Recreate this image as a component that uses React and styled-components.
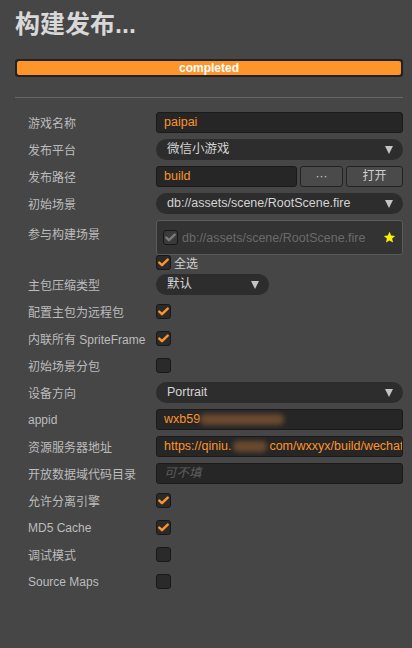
import React from "react";
import styled, { createGlobalStyle } from "styled-components";

const Global = createGlobalStyle`
  html, body { margin: 0; padding: 0; background: #464646; }
  body { font-family: "Liberation Sans", "Noto Sans CJK SC", sans-serif; }
  * { box-sizing: border-box; }
`;

const Page = styled.div`
  width: 412px;
  height: 648px;
  background: #464646;
  padding: 9px 9px 0 15px;
  overflow: hidden;
`;

const Title = styled.h1`
  margin: 0;
  font-size: 25px;
  line-height: 30px;
  font-weight: bold;
  color: #d8d8d8;
  letter-spacing: 0;
`;

const Progress = styled.div`
  margin-top: 20px;
  height: 18px;
  border: 2px solid #222;
  border-radius: 3px;
  background: #222;
  overflow: hidden;
`;

const ProgressFill = styled.div`
  height: 100%;
  background: #fd952b;
  border-radius: 2px;
  color: #fff;
  font-size: 12px;
  font-weight: bold;
  line-height: 14px;
  text-align: center;
`;

const Divider = styled.hr`
  margin: 20px 0 0 0;
  border: none;
  border-top: 1px solid #666;
  height: 0;
`;

const Form = styled.div`
  margin-top: 11px;
  padding-left: 13px;
  display: flex;
  flex-direction: column;
`;

const Row = styled.div`
  display: flex;
  align-items: ${(p) => (p.$top ? "flex-start" : "center")};
  height: ${(p) => p.$h || 27}px;
  padding-top: ${(p) => p.$pt || 0}px;
`;

const Label = styled.div`
  width: 128px;
  flex: none;
  font-size: 12px;
  color: #bcbcbc;
  white-space: nowrap;
  padding-top: ${(p) => p.$pt || 0}px;
`;

const Field = styled.div`
  flex: 1;
  display: flex;
  gap: 3px;
  min-width: 0;
`;

const Input = styled.div`
  flex: 1;
  height: 21px;
  min-width: 0;
  background: #262626;
  border: 1px solid #1a1a1a;
  border-radius: 3px;
  padding: 0 6px 0 7px;
  font-size: 12.5px;
  line-height: 19px;
  color: ${(p) => (p.$placeholder ? "#5e5e5e" : "#fd942b")};
  font-style: ${(p) => (p.$placeholder ? "italic" : "normal")};
  white-space: nowrap;
  overflow: hidden;
`;

const Blur = styled.span`
  display: inline-block;
  width: ${(p) => p.$w}px;
  height: 11px;
  vertical-align: middle;
  background: #6a4a30;
  filter: blur(2.5px);
  border-radius: 5px;
  margin: 0 ${(p) => p.$m || 0}px;
`;

const Select = styled.div`
  position: relative;
  flex: ${(p) => (p.$w ? "none" : "1")};
  width: ${(p) => (p.$w ? `${p.$w}px` : "auto")};
  height: 21px;
  background: #2d2d2d;
  border-radius: 11px;
  padding: 0 22px 0 11px;
  font-size: 12.5px;
  line-height: 21px;
  color: #d4d4d4;
  white-space: nowrap;
`;

const Arrow = styled.span`
  position: absolute;
  right: 10px;
  top: 7px;
  width: 0;
  height: 0;
  border-left: 4.5px solid transparent;
  border-right: 4.5px solid transparent;
  border-top: 8px solid #c4c4c4;
`;

const Button = styled.div`
  flex: none;
  width: ${(p) => p.$w}px;
  height: 21px;
  background: #4a4a4a;
  border: 1px solid #222;
  border-radius: 3px;
  color: #cfcfcf;
  font-size: 12px;
  line-height: 19px;
  text-align: center;
`;

const Box = styled.div`
  flex: 1;
  position: relative;
  height: 35px;
  background: #333;
  border: 1px solid #5a5a5a;
  border-radius: 3px;
  display: flex;
  align-items: center;
  padding: 0 6px;
  gap: 4px;
  font-size: 12.5px;
  color: #6a6a6a;
`;

const Star = styled.svg`
  position: absolute;
  right: 6px;
  top: 10px;
`;

const CheckBox = styled.div`
  flex: none;
  width: 15px;
  height: 15px;
  border-radius: 3px;
  border: 1px solid #181818;
  background: ${(p) => (p.$disabled ? "#3a3a3a" : "#2a2a2a")};
  display: flex;
  align-items: center;
  justify-content: center;
`;

const CheckLabel = styled.span`
  margin-left: 3px;
  font-size: 12px;
  color: #d0d0d0;
`;

const Check = ({ on, disabled }) => (
  <CheckBox $disabled={disabled}>
    {on && (
      <svg width="11" height="9" viewBox="0 0 11 9">
        <path
          d="M1.3 4.6 L4 7.2 L9.7 1.6"
          fill="none"
          stroke={disabled ? "#7a7a7a" : "#fd942b"}
          strokeWidth="2.4"
          strokeLinecap="round"
          strokeLinejoin="round"
        />
      </svg>
    )}
  </CheckBox>
);

const CheckRow = ({ label, on }) => (
  <Row>
    <Label>{label}</Label>
    <Check on={on} />
  </Row>
);

export default function App() {
  return (
    <Page>
      <Global />
      <Title>构建发布...</Title>
      <Progress>
        <ProgressFill>completed</ProgressFill>
      </Progress>
      <Divider />
      <Form>
        <Row>
          <Label>游戏名称</Label>
          <Field>
            <Input>paipai</Input>
          </Field>
        </Row>
        <Row>
          <Label>发布平台</Label>
          <Field>
            <Select>
              微信小游戏
              <Arrow />
            </Select>
          </Field>
        </Row>
        <Row>
          <Label>发布路径</Label>
          <Field>
            <Input>build</Input>
            <Button $w={43}>···</Button>
            <Button $w={57}>打开</Button>
          </Field>
        </Row>
        <Row>
          <Label>初始场景</Label>
          <Field>
            <Select>
              db://assets/scene/RootScene.fire
              <Arrow />
            </Select>
          </Field>
        </Row>
        <Row $top $h={37} $pt={3}>
          <Label $pt={5}>参与构建场景</Label>
          <Field>
            <Box>
              <Check on disabled />
              <span>db://assets/scene/RootScene.fire</span>
              <Star width="13" height="13" viewBox="0 0 24 24">
                <path
                  d="M12 1.5 L15.1 8.3 L22.5 9 L16.9 14 L18.5 21.4 L12 17.6 L5.5 21.4 L7.1 14 L1.5 9 L8.9 8.3 Z"
                  fill="#f8f000"
                />
              </Star>
            </Box>
          </Field>
        </Row>
        <Row $h={17}>
          <Label />
          <Check on />
          <CheckLabel>全选</CheckLabel>
        </Row>
        <Row>
          <Label>主包压缩类型</Label>
          <Select $w={113}>
            默认
            <Arrow />
          </Select>
        </Row>
        <CheckRow label="配置主包为远程包" on />
        <CheckRow label="内联所有 SpriteFrame" on />
        <CheckRow label="初始场景分包" />
        <Row>
          <Label>设备方向</Label>
          <Field>
            <Select>
              Portrait
              <Arrow />
            </Select>
          </Field>
        </Row>
        <Row>
          <Label>appid</Label>
          <Field>
            <Input>
              wxb59
              <Blur $w={84} />
            </Input>
          </Field>
        </Row>
        <Row>
          <Label>资源服务器地址</Label>
          <Field>
            <Input>
              https://qiniu.
              <Blur $w={34} $m={2} />
              com/wxxyx/build/wechat
            </Input>
          </Field>
        </Row>
        <Row>
          <Label>开放数据域代码目录</Label>
          <Field>
            <Input $placeholder>可不填</Input>
          </Field>
        </Row>
        <CheckRow label="允许分离引擎" on />
        <CheckRow label="MD5 Cache" on />
        <CheckRow label="调试模式" />
        <CheckRow label="Source Maps" />
      </Form>
    </Page>
  );
}
